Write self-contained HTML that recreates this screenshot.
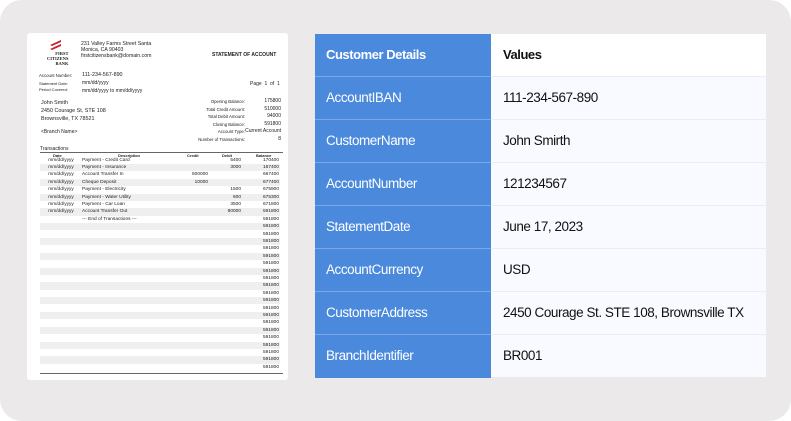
<!DOCTYPE html>
<html><head><style>
body{margin:0;width:791px;height:421px;background:#fff;overflow:hidden;font-family:"Liberation Sans",sans-serif}
.bg{position:absolute;left:0;top:0;width:791px;height:421px;background:#ebe9e9;border-radius:22px}
.doc{position:absolute;left:27px;top:33px;width:261px;height:347px;background:#fff;border-radius:3px;font-size:5px;color:#222}
.a{position:absolute;white-space:nowrap}
.tbl{position:absolute;left:315px;top:34px;width:451px;font-family:"Liberation Sans",sans-serif;font-size:13.5px;letter-spacing:-0.45px}
.row{display:flex;height:42px;border-bottom:1px solid #e8eef8;white-space:nowrap}
.row .k{flex:none;width:176px;background:#4a89dc;color:#fff;padding-left:11px;line-height:42px;border-bottom:1px solid #7aa8e6;margin-bottom:-1px;box-sizing:border-box}
.row .v{flex:1;min-width:0;overflow:hidden;background:#f8faff;color:#111;padding-left:12px;line-height:42px}
.tr{position:absolute;left:13px;width:240px;height:7.4px;font-size:4.8px;line-height:7.4px}
.tr.s{background:#efefef}
.tr span{position:absolute}
</style></head><body>
<div class="bg"></div>
<div class="doc">
<svg class="a" style="left:20px;top:6px" width="16" height="12" viewBox="0 0 16 12"><path d="M3 6 L14 1 L14 3 L5 7Z M3 10 L14 5 L14 7 L5 11Z" fill="#c8202a"/></svg>
<div class="a" style="left:20px;top:18px;font-family:'Liberation Serif',serif;font-size:4.5px;font-weight:bold;line-height:5px;text-align:right">FIRST<br>CITIZENS<br>BANK</div>
<div class="a" style="left:54px;top:8px;line-height:6px;font-size:5.2px">231 Valley Farms Street Santa<br>Monica, CA 90403<br>firstcitizensbank@domain.com</div>
<div class="a" style="left:185px;top:19px;font-weight:bold;font-size:5px">STATEMENT OF ACCOUNT</div>
<div class="a" style="left:12px;top:40px;font-size:4.3px">Account Number:</div><div class="a" style="left:55px;top:39px;font-size:5.4px">111-234-567-890</div>
<div class="a" style="left:12px;top:48px;font-size:4px">Statement Date:</div><div class="a" style="left:55px;top:47px">mm/dd/yyyy</div>
<div class="a" style="left:12px;top:54px;font-size:4px">Period Covered:</div><div class="a" style="left:55px;top:55px">mm/dd/yyyy to mm/dd/yyyy</div>
<div class="a" style="left:223px;top:48px">Page &nbsp;1 &nbsp;of &nbsp;1</div>
<div class="a" style="left:14px;top:66px;line-height:8px;font-size:5.4px">John Smith<br>2450 Courage St, STE 108<br>Brownsville, TX 78521</div>
<div class="a" style="left:14px;top:96px;font-size:5px">&lt;Branch Name&gt;</div>
<div class="a" style="left:170px;top:65px;font-size:4.3px;line-height:7.5px;text-align:right;width:48px">Opening Balance:<br>Total Credit Amount:<br>Total Debit Amount:<br>Closing Balance:<br>Account Type:<br>Number of Transactions:</div>
<div class="a" style="left:212px;top:65px;font-size:5px;line-height:7.5px;text-align:right;width:42px">175800<br>510000<br>94000<br>591800<br>Current Account<br>8</div>
<div class="a" style="left:13px;top:113px;font-size:5px">Transactions</div>
<div class="a" style="left:13px;top:119px;width:243px;border-top:1px solid #666"></div>
<div class="a" style="left:13px;top:120px;width:243px;font-weight:bold;font-size:4px"><span class="a" style="left:13px">Date</span><span class="a" style="left:78px">Description</span><span class="a" style="left:147px">Credit</span><span class="a" style="left:182px">Debit</span><span class="a" style="left:216px">Balance</span></div>
<div id="rows"></div>
<div class="a" style="left:13px;top:340px;width:243px;border-top:1px solid #666"></div>
</div>
<div class="tbl">
<div class="row" style="height:42px"><div class="k" style="font-weight:bold;font-size:13px">Customer Details</div><div class="v" style="font-weight:bold;font-size:13px;background:#fff">Values</div></div>
<div class="row"><div class="k">AccountIBAN</div><div class="v">111-234-567-890</div></div>
<div class="row"><div class="k">CustomerName</div><div class="v">John Smirth</div></div>
<div class="row"><div class="k">AccountNumber</div><div class="v">121234567</div></div>
<div class="row"><div class="k">StatementDate</div><div class="v">June 17, 2023</div></div>
<div class="row"><div class="k">AccountCurrency</div><div class="v">USD</div></div>
<div class="row"><div class="k">CustomerAddress</div><div class="v">2450 Courage St. STE 108, Brownsville TX</div></div>
<div class="row" style="border:none"><div class="k" style="border:none">BranchIdentifier</div><div class="v">BR001</div></div>
</div>
<script>
var d=[["mm/dd/yyyy","Payment - Credit Card","","5400","170400"],["mm/dd/yyyy","Payment - Insurance","","3000","167400"],["mm/dd/yyyy","Account Transfer In","500000","","667400"],["mm/dd/yyyy","Cheque Deposit","10000","","677400"],["mm/dd/yyyy","Payment - Electricity","","1500","675900"],["mm/dd/yyyy","Payment - Water Utility","","600","675300"],["mm/dd/yyyy","Payment - Car Loan","","3500","671800"],["mm/dd/yyyy","Account Transfer Out","","80000","591800"],["","--- End of Transactions ---","","","591800"]];
while(d.length<29)d.push(["","","","","591800"]);
var h="";d.forEach(function(r,i){h+='<div class="tr'+(i%2?' s':'')+'" style="top:'+(123.5+i*7.4)+'px"><span style="left:6px;width:30px;text-align:center">'+r[0]+'</span><span style="left:42px">'+r[1]+'</span><span style="right:72px">'+r[2]+'</span><span style="right:39px">'+r[3]+'</span><span style="right:1px">'+r[4]+'</span></div>'});
document.getElementById("rows").outerHTML=h;
</script>
</body></html>
